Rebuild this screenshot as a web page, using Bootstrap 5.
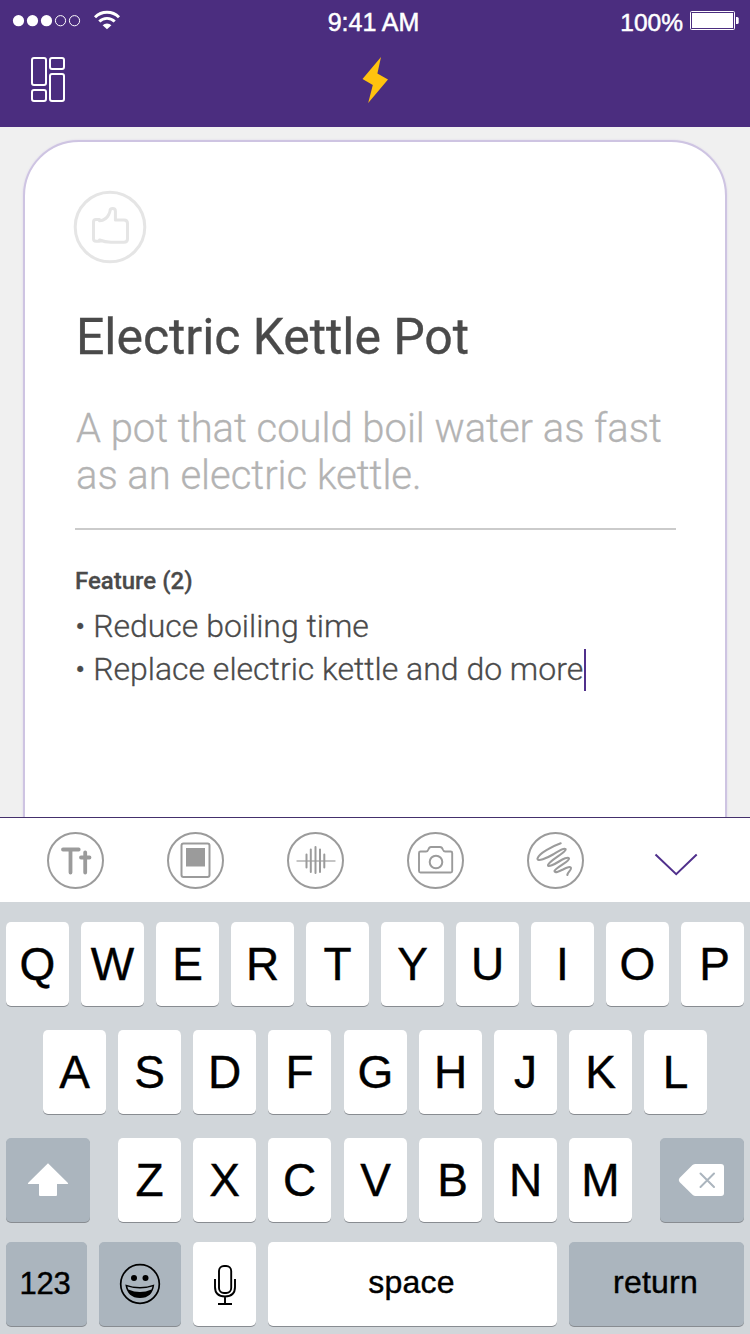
<!DOCTYPE html>
<html lang="en">
<head>
<meta charset="utf-8">
<meta name="viewport" content="width=device-width, initial-scale=1">
<title>Idea note</title>
<link href="https://cdn.jsdelivr.net/npm/bootstrap@5.3.0/dist/css/bootstrap.min.css" rel="stylesheet">
<style>
  body { width: 750px; height: 1334px; overflow: hidden; background: #f0f0f0; font-family: Roboto, sans-serif; color: #4a4a4a; }
  svg { display: block; flex: none; }
  .app-head { height: 127px; background: #4b2d7f; color: #fff; font-family: "Liberation Sans", sans-serif; }
  .status { height: 42px; padding: 0 11px 0 12px; font-size: 25px; line-height: 42px; -webkit-text-stroke: .5px #fff; }
  .status > *, .tools > * { flex: 1 1 0; }
  .clock { padding: 2px 4px 0 0; }
  .charge { padding-top: 3px; font-size: 24.5px; }
  .tools { height: 85px; padding: 14px 30px 0; }
  .stage { height: 690px; padding: 13px 23px 0; overflow: hidden; }
  .note { height: 740px; background: #fff; border: 2px solid #cec4e2; border-radius: 56px; padding: 48px 48px 0; box-shadow: 0 0 2px #d9d1e8; }
  .note h1 { font-size: 50px; line-height: 60px; margin: 43px 0 0 3px; font-weight: 400; white-space: nowrap; letter-spacing: -.07px; -webkit-text-stroke: .3px #4a4a4a; }
  .desc { font-size: 40px; line-height: 47px; font-weight: 300; color: #b3b3b3; margin: 38px 0 0 3px; white-space: nowrap; letter-spacing: -.03px; -webkit-text-stroke: .3px #b3b3b3; }
  .rule { height: 2px; width: 601px; background: #cbcbcb; margin: 29px 0 0 2px; }
  .note h2 { font-size: 24px; line-height: 30px; font-weight: 500; margin: 36px 0 0 2px; -webkit-text-stroke: .3px #4a4a4a; }
  .points { font-size: 32px; line-height: 43px; font-weight: 300; margin: 9px 0 0 2px; white-space: nowrap; letter-spacing: -.01px; -webkit-text-stroke: .3px #4a4a4a; }
  .caret { width: 2px; height: 42px; background: #50308c; margin-left: 1px; }
  .attach { height: 85px; background: #fff; border-top: 1px solid #44306c; padding: 14px 47px 0; gap: 63px; }
  .keys { height: 432px; background: #d1d6da; padding: 20px 6px 0; font-family: "Liberation Sans", sans-serif; color: #000; }
  .keyrow { height: 84px; gap: 12px; }
  .keyrow + .keyrow { margin-top: 24px; }
  .keyrow + .keyrow.row-last { margin-top: 20px; }
  .key { height: 84px; width: 63px; flex: none; background: #fff; border-radius: 5px; box-shadow: 0 1px 0 #888c91; font-size: 46px; line-height: 84px; -webkit-text-stroke: .4px #000; }
  .key-gap { margin-right: 1px; }
  .key-wide { width: 84px; }
  .key-alt { background: #abb5be; }
  .key-txt { font-size: 32px; line-height: 80px; letter-spacing: .2px; padding-right: 2px; }
  .key-num { width: 81px; font-size: 31px; line-height: 84px; padding-right: 3px; letter-spacing: -.3px; }
</style>
</head>
<body>
<header class="app-head">
  <div class="status d-flex align-items-center">
    <div class="d-flex">
      <svg width="110" height="42" viewBox="12 0 110 42" fill="#fff">
        <g><circle cx="18.5" cy="20.7" r="5.6"/><circle cx="32.5" cy="20.7" r="5.6"/><circle cx="46.5" cy="20.7" r="5.6"/></g>
        <g fill="none" stroke="#fff" stroke-width="1"><circle cx="60.5" cy="20.7" r="5.1"/><circle cx="74.5" cy="20.7" r="5.1"/></g>
        <g fill="none" stroke="#fff" stroke-width="2.9"><path d="M95 17.2a17 17 0 0 1 24 0"/><path d="M99.3 21.6a10.800 10.800 0 0 1 15.400 0"/></g>
        <path d="M102.600 25.300a6 6 0 0 1 8.800 0L107 29.300z"/>
      </svg>
    </div>
    <div class="clock text-center text-nowrap">9:41 AM</div>
    <div class="d-flex justify-content-end align-items-center">
      <span class="charge">100%</span>
      <svg width="50" height="42" viewBox="689 0 50 42" style="margin-left:6px">
        <rect x="690.5" y="11.5" width="44" height="18" rx="1" fill="none" stroke="#fff"/>
        <rect x="692" y="13" width="41" height="15" fill="#fff"/>
        <path d="M736 17h1.2q1.5 0 1.5 1.5v4q0 1.500-1.500 1.500H736z" fill="#fff"/>
      </svg>
    </div>
  </div>
  <div class="tools d-flex">
    <div>
      <svg width="36" height="48" viewBox="30 56 36 48" fill="none" stroke="#fff" stroke-width="2">
        <rect x="32" y="58" width="14" height="27" rx="2"/><rect x="50" y="58" width="14" height="11" rx="2"/>
        <rect x="32" y="90" width="14" height="11" rx="2"/><rect x="50" y="74" width="14" height="27" rx="2"/>
      </svg>
    </div>
    <div class="d-flex justify-content-center">
      <svg width="26" height="48" viewBox="362 56 26 48" fill="#ffc20e"><path d="M381 57l-3.600 16.500L388 79.500 368.200 103l4.600-18L362.500 79z"/></svg>
    </div>
    <div></div>
  </div>
</header>

<main class="stage">
  <article class="note">
    <svg width="74" height="74" viewBox="73 190 74 74" fill="none" stroke="#e5e5e5" stroke-width="3" stroke-linejoin="round">
      <circle cx="110" cy="227" r="34.800"/>
      <path d="M93.500 222q0-2.500 2.500-2.500h3.500v1.300q6.500-.5 9.300-6.300 1.200-2.700 1.200-3.500 0-2.500 2.700-2.500t2.700 2.500v8.900h8.600q3.500 0 3.500 3.500v15.500q0 3.300-3.500 3.300h-13q-6 0-11.500-2.200v1.300H96q-2.500 0-2.500-2.500z"/>
    </svg>
    <h1>Electric Kettle Pot</h1>
    <div class="desc">A pot that could boil water as fast<br>as an electric kettle.</div>
    <div class="rule"></div>
    <h2>Feature (2)</h2>
    <div class="points">
      <div>• Reduce boiling time</div>
      <div class="d-flex align-items-center"><span>• Replace electric kettle and do more</span><span class="caret"></span></div>
    </div>
  </article>
</main>

<nav class="attach d-flex">
  <svg width="57" height="57" viewBox="0 0 57 57" fill="none" stroke="#9b9b9b" stroke-linecap="round">
    <circle cx="28.500" cy="28.500" r="27.500" stroke-width="2"/><path d="M16 17.500h15.700M23.500 18v22.500M34 25.500h8.500M38.200 20.300v20.200" stroke-width="3.800"/>
  </svg>
  <svg width="57" height="57" viewBox="0 0 57 57" fill="none" stroke="#9b9b9b">
    <circle cx="28.500" cy="28.500" r="27.500" stroke-width="2"/><rect x="14.500" y="11.500" width="28" height="33.500" rx="2" stroke-width="2"/><rect x="19" y="16" width="19" height="18.500" fill="#9b9b9b" stroke="none"/>
  </svg>
  <svg width="57" height="57" viewBox="0 0 57 57" fill="none" stroke="#9b9b9b" stroke-linecap="round">
    <circle cx="28.500" cy="28.500" r="27.500" stroke-width="2"/><path d="M10 29h38" stroke-width="1.300" stroke="#b2b2b2"/><path d="M19.500 22.500v13M23.800 17.500v22.500M28.500 15v26M33 17.500v22.500M37.300 22.500v13" stroke-width="2"/>
  </svg>
  <svg width="57" height="57" viewBox="0 0 57 57" fill="none" stroke="#9b9b9b" stroke-linejoin="round">
    <circle cx="28.500" cy="28.500" r="27.500" stroke-width="2"/><path d="M13.500 19.500H19q1.800 0 2.500-2.200.7-2.300 2.500-2.300h9q2 0 2.700 2.300.8 2.200 2.500 2.200h5.500q1.500 0 1.500 1.500v18q0 1.500-1.500 1.500h-30.200q-1.500 0-1.500-1.500V21q0-1.500 1.500-1.500z" stroke-width="1.900"/><circle cx="29" cy="30" r="6.300" stroke-width="2"/>
  </svg>
  <svg width="57" height="57" viewBox="0 0 57 57" fill="none" stroke="#9b9b9b" stroke-linecap="round" stroke-linejoin="round">
    <circle cx="28.500" cy="28.500" r="27.500" stroke-width="2"/><path d="M33.700 11.300C25 14.500 12 21 10.500 26.500C10 30.500 20 26 26 22.500C31 19.500 36.500 15.500 38.500 17C40.500 19.500 22 28.500 21 33C20.500 36 28 32 32 29.500C36 27 41 24.500 42 26.500C43 29.500 28 35.500 27.500 39C27.500 41.500 32 39.500 36 37.500C40 35.300 43.500 34 44 36C44.300 38.500 41 39.500 40.300 43" stroke-width="2.100"/>
  </svg>
  <svg width="57" height="57" viewBox="0 0 57 57" fill="none" stroke="#50308c" stroke-width="2"><path d="M8.500 22.500l20.700 19.700L49.700 22.500"/></svg>
</nav>

<section class="keys text-center">
  <div class="keyrow d-flex">
    <div class="key">Q</div><div class="key">W</div><div class="key">E</div><div class="key">R</div><div class="key">T</div><div class="key">Y</div><div class="key">U</div><div class="key">I</div><div class="key">O</div><div class="key ps-1">P</div>
  </div>
  <div class="keyrow d-flex justify-content-center">
    <div class="key">A</div><div class="key">S</div><div class="key">D</div><div class="key key-gap">F</div><div class="key">G</div><div class="key">H</div><div class="key">J</div><div class="key">K</div><div class="key">L</div>
  </div>
  <div class="keyrow d-flex justify-content-between">
    <div class="key key-alt key-wide">
      <svg width="84" height="84" viewBox="0 0 84 84" fill="#fff"><path d="M42 25.300L62 45q.5 1-.5 1H51v11q0 1-1 1H34q-1 0-1-1V46H22.500q-1 0-.5-1z"/></svg>
    </div>
    <div class="d-flex" style="gap:12px">
      <div class="key">Z</div><div class="key">X</div><div class="key key-gap">C</div><div class="key">V</div><div class="key ps-1">B</div><div class="key">N</div><div class="key">M</div>
    </div>
    <div class="key key-alt key-wide">
      <svg width="84" height="84" viewBox="0 0 84 84" fill="#fff"><path d="M32.500 27Q34 26 35.500 26H61q3 0 3 3v26q0 3-3 3H35.500q-1.500 0-3-1.200L19.500 44q-1.500-2 0-4z"/><path d="M40.500 35.500l13.500 13.500M54 35.500L40.500 49" stroke="#abb5be" stroke-width="2" stroke-linecap="round"/></svg>
    </div>
  </div>
  <div class="keyrow row-last d-flex">
    <div class="key key-alt key-num">123</div>
    <div class="key key-alt" style="width:82px">
      <svg width="82" height="84" viewBox="0 0 82 84"><circle cx="41" cy="42" r="19.300" fill="none" stroke="#000" stroke-width="1.700"/><circle cx="35" cy="36" r="3"/><circle cx="46.500" cy="36" r="3"/><path d="M26.300 42.500Q41 47.500 55.300 42.500 53.500 56 41 56 28.500 56 26.300 42.500z"/><path d="M28.300 44.500Q41 48.700 53.500 44.500L52.500 47.500Q41 52.500 29.300 47.500z" fill="#abb5be"/></svg>
    </div>
    <div class="key">
      <svg width="63" height="84" viewBox="0 0 63 84" fill="none" stroke="#000" stroke-width="1.900"><rect x="26" y="24" width="12.200" height="27" rx="5"/><path d="M22 37v8q0 9.500 10 9.500t10-9.500v-8M32 54.500V62M25 62h14"/></svg>
    </div>
    <div class="key key-txt" style="width:289px">space</div>
    <div class="key key-alt key-txt" style="width:175px">return</div>
  </div>
</section>
<script src="https://cdn.jsdelivr.net/npm/bootstrap@5.3.0/dist/js/bootstrap.bundle.min.js"></script>
</body>
</html>
